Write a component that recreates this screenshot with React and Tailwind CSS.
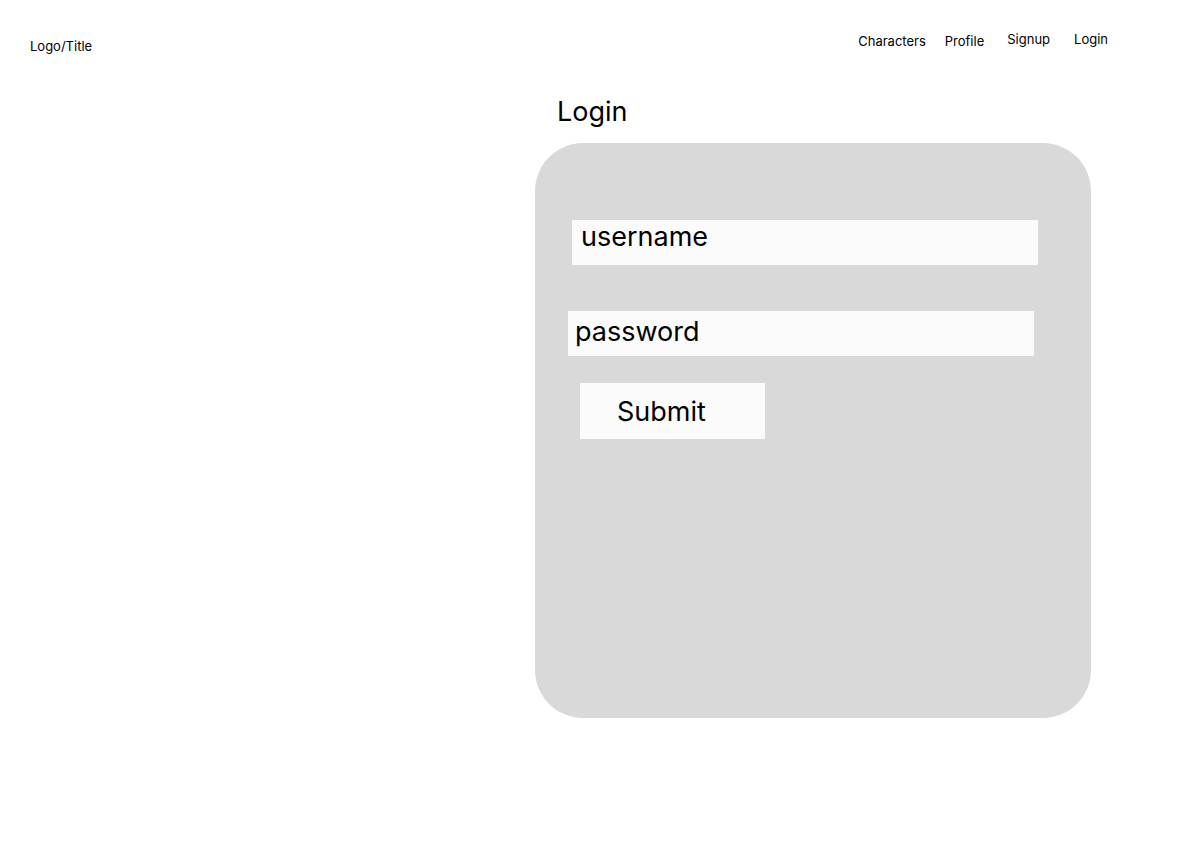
const navLinks = [
  { name: 'Characters', className: 'mt-[33px] ml-0' },
  { name: 'Profile', className: 'mt-[33px] ml-[19px]' },
  { name: 'Signup', className: 'mt-[31px] ml-[23px]' },
  { name: 'Login', className: 'mt-[31px] ml-[24px]' },
];

const App = () => {
  return (
    <div className="min-h-screen bg-white text-black font-['Inter','Liberation_Sans',sans-serif]">
      {/* Header */}
      <header className="flex items-start justify-between pl-[30px] pr-[91px]">
        <span className="mt-[38px] text-[13px] leading-4">Logo/Title</span>
        <nav className="flex items-start">
          {navLinks.map((link) => (
            <a key={link.name} href="#" className={`text-[13px] leading-4 ${link.className}`}>
              {link.name}
            </a>
          ))}
        </nav>
      </header>

      {/* Login form */}
      <main className="ml-[535px] mt-[39px] w-[556px]">
        <h1 className="ml-[22px] text-[27px] leading-[38px] font-normal">Login</h1>
        <div className="mt-3 h-[575px] rounded-[48px] bg-[#d9d9d9] pt-[77px]">
          <div className="ml-[37px] h-[45px] w-[466px] bg-[#fbfbfb] pl-[9px] text-[27px] leading-[34px]">
            username
          </div>
          <div className="ml-[33px] mt-[46px] h-[45px] w-[466px] bg-[#fbfbfb] pl-[7px] text-[27px] leading-[42px]">
            password
          </div>
          <button
            type="button"
            className="ml-[45px] mt-[27px] block h-[56px] w-[185px] bg-[#fbfbfb] pl-[37px] pt-[2px] text-left text-[27px] leading-[54px]"
          >
            Submit
          </button>
        </div>
      </main>
    </div>
  );
};

export default App;
